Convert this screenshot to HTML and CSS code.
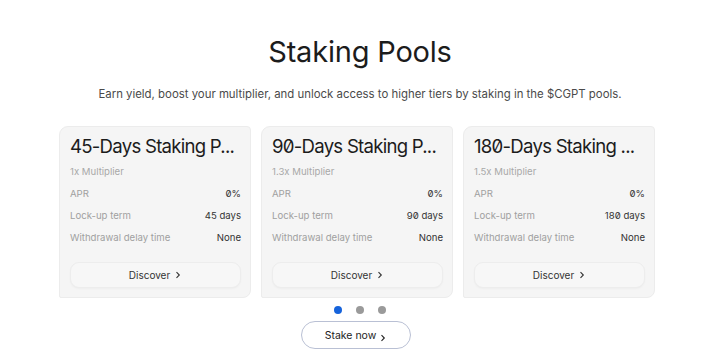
FILE: index.html
```html
<!DOCTYPE html>
<html lang="en">

<head>
    <meta charset="utf-8">
    <meta name="viewport" content="width=device-width, initial-scale=1.0">
    <title>Staking Pools</title>
    <link rel="stylesheet" href="styles.css">
</head>

<body>

    <section class="pools">
        <h1>Staking Pools</h1>
        <p class="intro">Earn yield, boost your multiplier, and unlock access to higher tiers by staking in the $CGPT pools.</p>

        <div class="cards">
            <article class="card">
                <h3>45-Days Staking P...</h3>
                <p class="multi">1x Multiplier</p>
                <div class="row"><span>APR</span><b>0%</b></div>
                <div class="row"><span>Lock-up term</span><b>45 days</b></div>
                <div class="row"><span>Withdrawal delay time</span><b>None</b></div>
                <button class="discover">Discover <svg width="8" height="8" viewBox="0 0 8 8"><path d="M2.5 1.2 5.3 4 2.5 6.8" fill="none" stroke="#333" stroke-width="1.1"/></svg></button>
            </article>

            <article class="card">
                <h3>90-Days Staking P...</h3>
                <p class="multi">1.3x Multiplier</p>
                <div class="row"><span>APR</span><b>0%</b></div>
                <div class="row"><span>Lock-up term</span><b>90 days</b></div>
                <div class="row"><span>Withdrawal delay time</span><b>None</b></div>
                <button class="discover">Discover <svg width="8" height="8" viewBox="0 0 8 8"><path d="M2.5 1.2 5.3 4 2.5 6.8" fill="none" stroke="#333" stroke-width="1.1"/></svg></button>
            </article>

            <article class="card">
                <h3>180-Days Staking ...</h3>
                <p class="multi">1.5x Multiplier</p>
                <div class="row"><span>APR</span><b>0%</b></div>
                <div class="row"><span>Lock-up term</span><b>180 days</b></div>
                <div class="row"><span>Withdrawal delay time</span><b>None</b></div>
                <button class="discover">Discover <svg width="8" height="8" viewBox="0 0 8 8"><path d="M2.5 1.2 5.3 4 2.5 6.8" fill="none" stroke="#333" stroke-width="1.1"/></svg></button>
            </article>
        </div>

        <div class="dots">
            <span class="dot aktiv"></span>
            <span class="dot"></span>
            <span class="dot"></span>
        </div>

        <button class="stake">Stake now <svg width="8" height="8" viewBox="0 0 8 8"><path d="M2.5 1.2 5.3 4 2.5 6.8" fill="none" stroke="#222" stroke-width="1.1"/></svg></button>
    </section>

</body></html>
```

FILE: styles.css
```css
* {
    box-sizing: border-box;
}

body {
    margin: 0;
    background-color: #fff;
    font-family: 'Inter', sans-serif;
    font-feature-settings: "zero" 1;
    color: #222;
}

.pools {
    display: flex;
    flex-direction: column;
    align-items: center;
    padding-top: 34px;
}

h1 {
    margin: 0;
    font-size: 29px;
    font-weight: 400;
    letter-spacing: -0.2px;
    color: #1c1c1c;
}

.intro {
    margin: 18px 0 0 0;
    font-size: 11.4px;
    color: #4a4a4a;
}

.cards {
    display: flex;
    gap: 10px;
    margin-top: 25px;
    padding-right: 6px;
}

.card {
    width: 192px;
    height: 172px;
    padding: 8px 9px 0 10px;
    background-color: #f5f5f5;
    border: 1px solid #ececec;
    border-radius: 9px 4px 8px 2px;
}

h3 {
    margin: 0;
    font-size: 18.6px;
    font-weight: 400;
    letter-spacing: -0.75px;
    color: #1c1c1c;
    white-space: nowrap;
    line-height: 22px;
}

.multi {
    margin: 9px 0 0 0;
    font-size: 9.6px;
    color: #a8a8a8;
    line-height: 12px;
}

.row {
    display: flex;
    justify-content: space-between;
    margin-top: 10px;
    font-size: 9.6px;
    line-height: 12px;
}

.row span {
    color: #a0a0a0;
}

.row b {
    font-weight: 400;
    color: #333;
}

.discover {
    display: flex;
    align-items: center;
    justify-content: center;
    gap: 4px;
    width: 100%;
    height: 26px;
    margin-top: 18px;
    border: 1px solid #ededed;
    border-radius: 9px;
    background-color: #f7f7f7;
    box-shadow: 0 1px 2px rgba(0, 0, 0, 0.03);
    font-family: 'Inter', sans-serif;
    font-size: 10px;
    color: #333;
}

.dots {
    display: flex;
    gap: 14px;
    margin-top: 8px;
}

.dot {
    width: 8px;
    height: 8px;
    border-radius: 50%;
    background-color: #9a9a9a;
}

.aktiv {
    background-color: #1663db;
}

.stake {
    display: flex;
    align-items: center;
    gap: 3px;
    margin: 7px 8px 0 0;
    width: 110px;
    height: 28px;
    justify-content: center;
    border: 1px solid #b9c0d4;
    border-radius: 14px;
    background-color: #fff;
    font-family: 'Inter', sans-serif;
    font-size: 10.5px;
    color: #222;
}

.stake svg {
    margin-top: 5px;
}
```
